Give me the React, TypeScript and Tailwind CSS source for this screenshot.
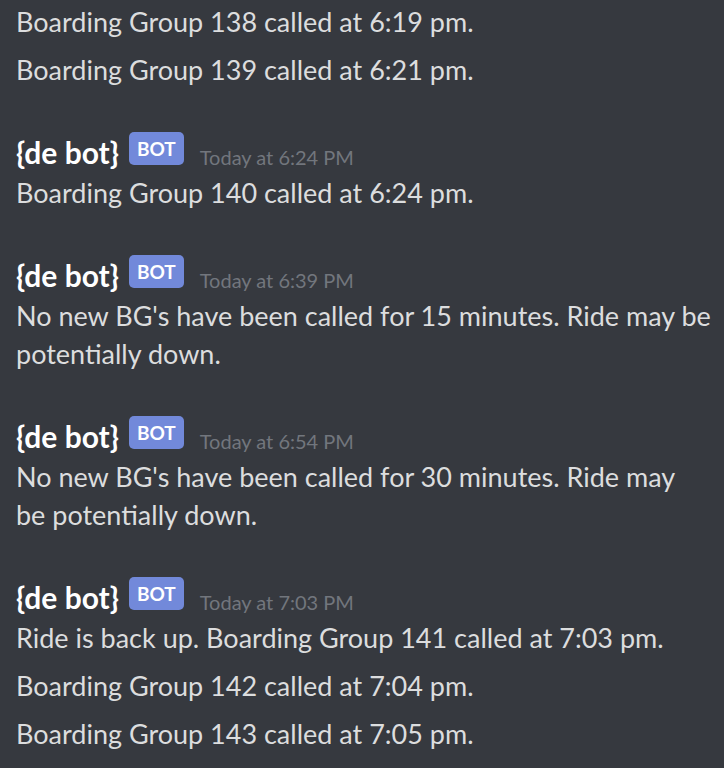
import React from "react";

type Msg = { lines: string[] };
type Group = { author?: string; time?: string; messages: Msg[] };

const groups: Group[] = [
  {
    messages: [
      { lines: ["Boarding Group 138 called at 6:19 pm."] },
      { lines: ["Boarding Group 139 called at 6:21 pm."] },
    ],
  },
  {
    author: "{de bot}",
    time: "Today at 6:24 PM",
    messages: [{ lines: ["Boarding Group 140 called at 6:24 pm."] }],
  },
  {
    author: "{de bot}",
    time: "Today at 6:39 PM",
    messages: [{ lines: ["No new BG's have been called for 15 minutes. Ride may be", "potentially down."] }],
  },
  {
    author: "{de bot}",
    time: "Today at 6:54 PM",
    messages: [{ lines: ["No new BG's have been called for 30 minutes. Ride may", "be potentially down."] }],
  },
  {
    author: "{de bot}",
    time: "Today at 7:03 PM",
    messages: [
      { lines: ["Ride is back up. Boarding Group 141 called at 7:03 pm."] },
      { lines: ["Boarding Group 142 called at 7:04 pm."] },
      { lines: ["Boarding Group 143 called at 7:05 pm."] },
    ],
  },
];

function BotTag() {
  return (
    <span className="ml-[10px] mb-[8px] inline-flex h-[33px] items-center rounded-[5px] bg-[#7289da] px-[8px] text-[19px] font-bold leading-none text-white">
      BOT
    </span>
  );
}

export default function App() {
  return (
    <div
      className="flex h-[768px] w-[724px] flex-col gap-[46px] overflow-hidden bg-[#36393f] pl-[16px] pr-[4px] pt-[3px]"
      style={{ fontFamily: "Lato, 'Noto Sans', sans-serif" }}
    >
      {groups.map((g, i) => (
        <div key={i} className="flex flex-col">
          {g.author && (
            <div className="flex h-[35px] items-center">
              <span className="text-[30px] font-bold leading-[35px] text-white">{g.author}</span>
              <BotTag />
              <span className="ml-[16px] mt-[8px] text-[20px] text-[#72767d]">{g.time}</span>
            </div>
          )}
          <div className={`flex flex-col gap-[10px] ${g.author ? "pt-[4px]" : ""}`}>
            {g.messages.map((m, j) => (
              <p key={j} className="whitespace-nowrap text-[27px] leading-[38px] text-[#dcddde]">
                {m.lines.map((l, k) => (
                  <React.Fragment key={k}>
                    {k > 0 && <br />}
                    {l}
                  </React.Fragment>
                ))}
              </p>
            ))}
          </div>
        </div>
      ))}
    </div>
  );
}
